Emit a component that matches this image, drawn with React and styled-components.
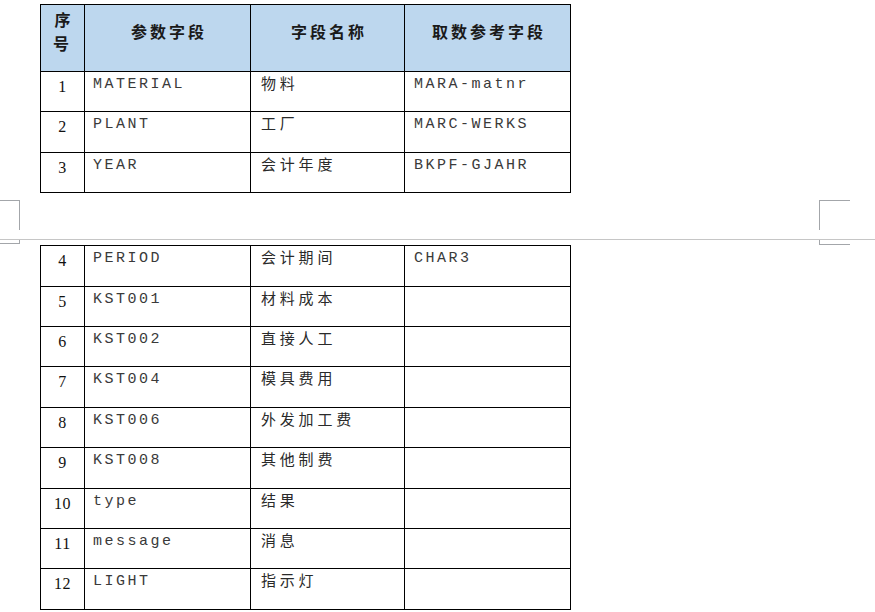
import React from 'react'
import styled, { createGlobalStyle } from 'styled-components'

const GlobalStyle = createGlobalStyle`
	html, body {
		margin: 0;
		padding: 0;
		background: #fff;
	}
	body {
		font-family: 'Liberation Serif', 'Noto Sans CJK SC', serif;
	}
`

const head = ['序号', '参数字段', '字段名称', '取数参考字段']

const firstPage = [
	{ no: 1, field: 'MATERIAL', name: '物料', source: 'MARA-matnr' },
	{ no: 2, field: 'PLANT', name: '工厂', source: 'MARC-WERKS' },
	{ no: 3, field: 'YEAR', name: '会计年度', source: 'BKPF-GJAHR' },
]

const secondPage = [
	{ no: 4, field: 'PERIOD', name: '会计期间', source: 'CHAR3' },
	{ no: 5, field: 'KST001', name: '材料成本', source: '' },
	{ no: 6, field: 'KST002', name: '直接人工', source: '' },
	{ no: 7, field: 'KST004', name: '模具费用', source: '' },
	{ no: 8, field: 'KST006', name: '外发加工费', source: '' },
	{ no: 9, field: 'KST008', name: '其他制费', source: '' },
	{ no: 10, field: 'type', name: '结果', source: '' },
	{ no: 11, field: 'message', name: '消息', source: '' },
	{ no: 12, field: 'LIGHT', name: '指示灯', source: '' },
]

const Page = styled.div`
	width: 875px;
	height: 612px;
	overflow: hidden;
	display: flex;
	flex-direction: column;
	padding-top: 4px;
	box-sizing: border-box;

	& > * {
		flex-shrink: 0;
	}
`

const Table = styled.table`
	margin-left: 40px;
	border-collapse: collapse;
	table-layout: fixed;
	width: 531px;

	td, th {
		border: 1px solid #000;
		padding: 0;
		overflow: hidden;
		white-space: nowrap;
	}
`

const HeadRow = styled.tr`
	height: 67px;
	background: #bdd7ee;
`

const HeadCell = styled.th`
	vertical-align: middle;
	padding-bottom: 14px !important;
	font-family: 'Noto Sans CJK SC', sans-serif;
	font-size: 16px;
	font-weight: 700;
	letter-spacing: 3px;
	text-indent: 3px;
	line-height: 24px;
	color: #1a1a1a;
	white-space: ${({ $wrap }) => ($wrap ? 'normal' : 'nowrap')} !important;
`

const Row = styled.tr`
	height: 40.4px;
`

const NoCell = styled.td`
	vertical-align: top;
	text-align: center;
	padding-top: 6px !important;
	font-family: 'Liberation Serif', serif;
	font-size: 16px;
	line-height: 18px;
	letter-spacing: 0.5px;
	color: #111;
`

const CodeCell = styled.td`
	vertical-align: top;
	padding: 4px 0 0 ${({ $pad }) => $pad}px !important;
	font-family: 'Liberation Mono', monospace;
	font-size: 15px;
	line-height: 18px;
	letter-spacing: 2.5px;
	color: #3a3a3a;
`

const NameCell = styled.td`
	vertical-align: top;
	padding: 1px 0 0 10px !important;
	font-family: 'Noto Sans CJK SC', sans-serif;
	font-size: 15px;
	line-height: 20px;
	letter-spacing: 3.8px;
	color: #2a2a2a;
`

const BreakRow = styled.div`
	display: flex;
	justify-content: space-between;
	align-items: flex-start;
	padding-right: 25px;
	margin-top: ${({ $top }) => $top}px;
`

const Mark = styled.div`
	width: ${({ $side }) => ($side === 'left' ? 19 : 30)}px;
	height: ${({ $h }) => $h}px;
	border-color: #a3a6aa;
	border-style: solid;
	border-width: 0;
	border-${({ $side }) => ($side === 'left' ? 'right' : 'left')}-width: 1px;
	border-${({ $edge }) => $edge}-width: 1px;
`

const Separator = styled.div`
	height: 1px;
	background: #c6c6c6;
	margin-top: 9px;
`

const Cols = () => (
	<colgroup>
		<col style={{ width: 44 }} />
		<col style={{ width: 166 }} />
		<col style={{ width: 154 }} />
		<col style={{ width: 166 }} />
	</colgroup>
)

const DataRow = ({ row }) => (
	<Row>
		<NoCell>{row.no}</NoCell>
		<CodeCell $pad={8}>{row.field}</CodeCell>
		<NameCell>{row.name}</NameCell>
		<CodeCell $pad={9}>{row.source}</CodeCell>
	</Row>
)

const App = () => (
	<Page>
		<GlobalStyle />
		<Table>
			<Cols />
			<thead>
				<HeadRow>
					{head.map((h, i) => (
						<HeadCell key={h} $wrap={i === 0}>
							{i === 0 ? (
								<>
									序<br />号
								</>
							) : (
								h
							)}
						</HeadCell>
					))}
				</HeadRow>
			</thead>
			<tbody>
				{firstPage.map(row => (
					<DataRow key={row.no} row={row} />
				))}
			</tbody>
		</Table>

		<BreakRow $top={7}>
			<Mark $side="left" $edge="top" $h={29} />
			<Mark $side="right" $edge="top" $h={29} />
		</BreakRow>
		<Separator />
		<BreakRow $top={0}>
			<Mark $side="left" $edge="bottom" $h={3} />
			<Mark $side="right" $edge="bottom" $h={4} />
		</BreakRow>

		<Table>
			<Cols />
			<tbody>
				{secondPage.map(row => (
					<DataRow key={row.no} row={row} />
				))}
			</tbody>
		</Table>
	</Page>
)

export default App
